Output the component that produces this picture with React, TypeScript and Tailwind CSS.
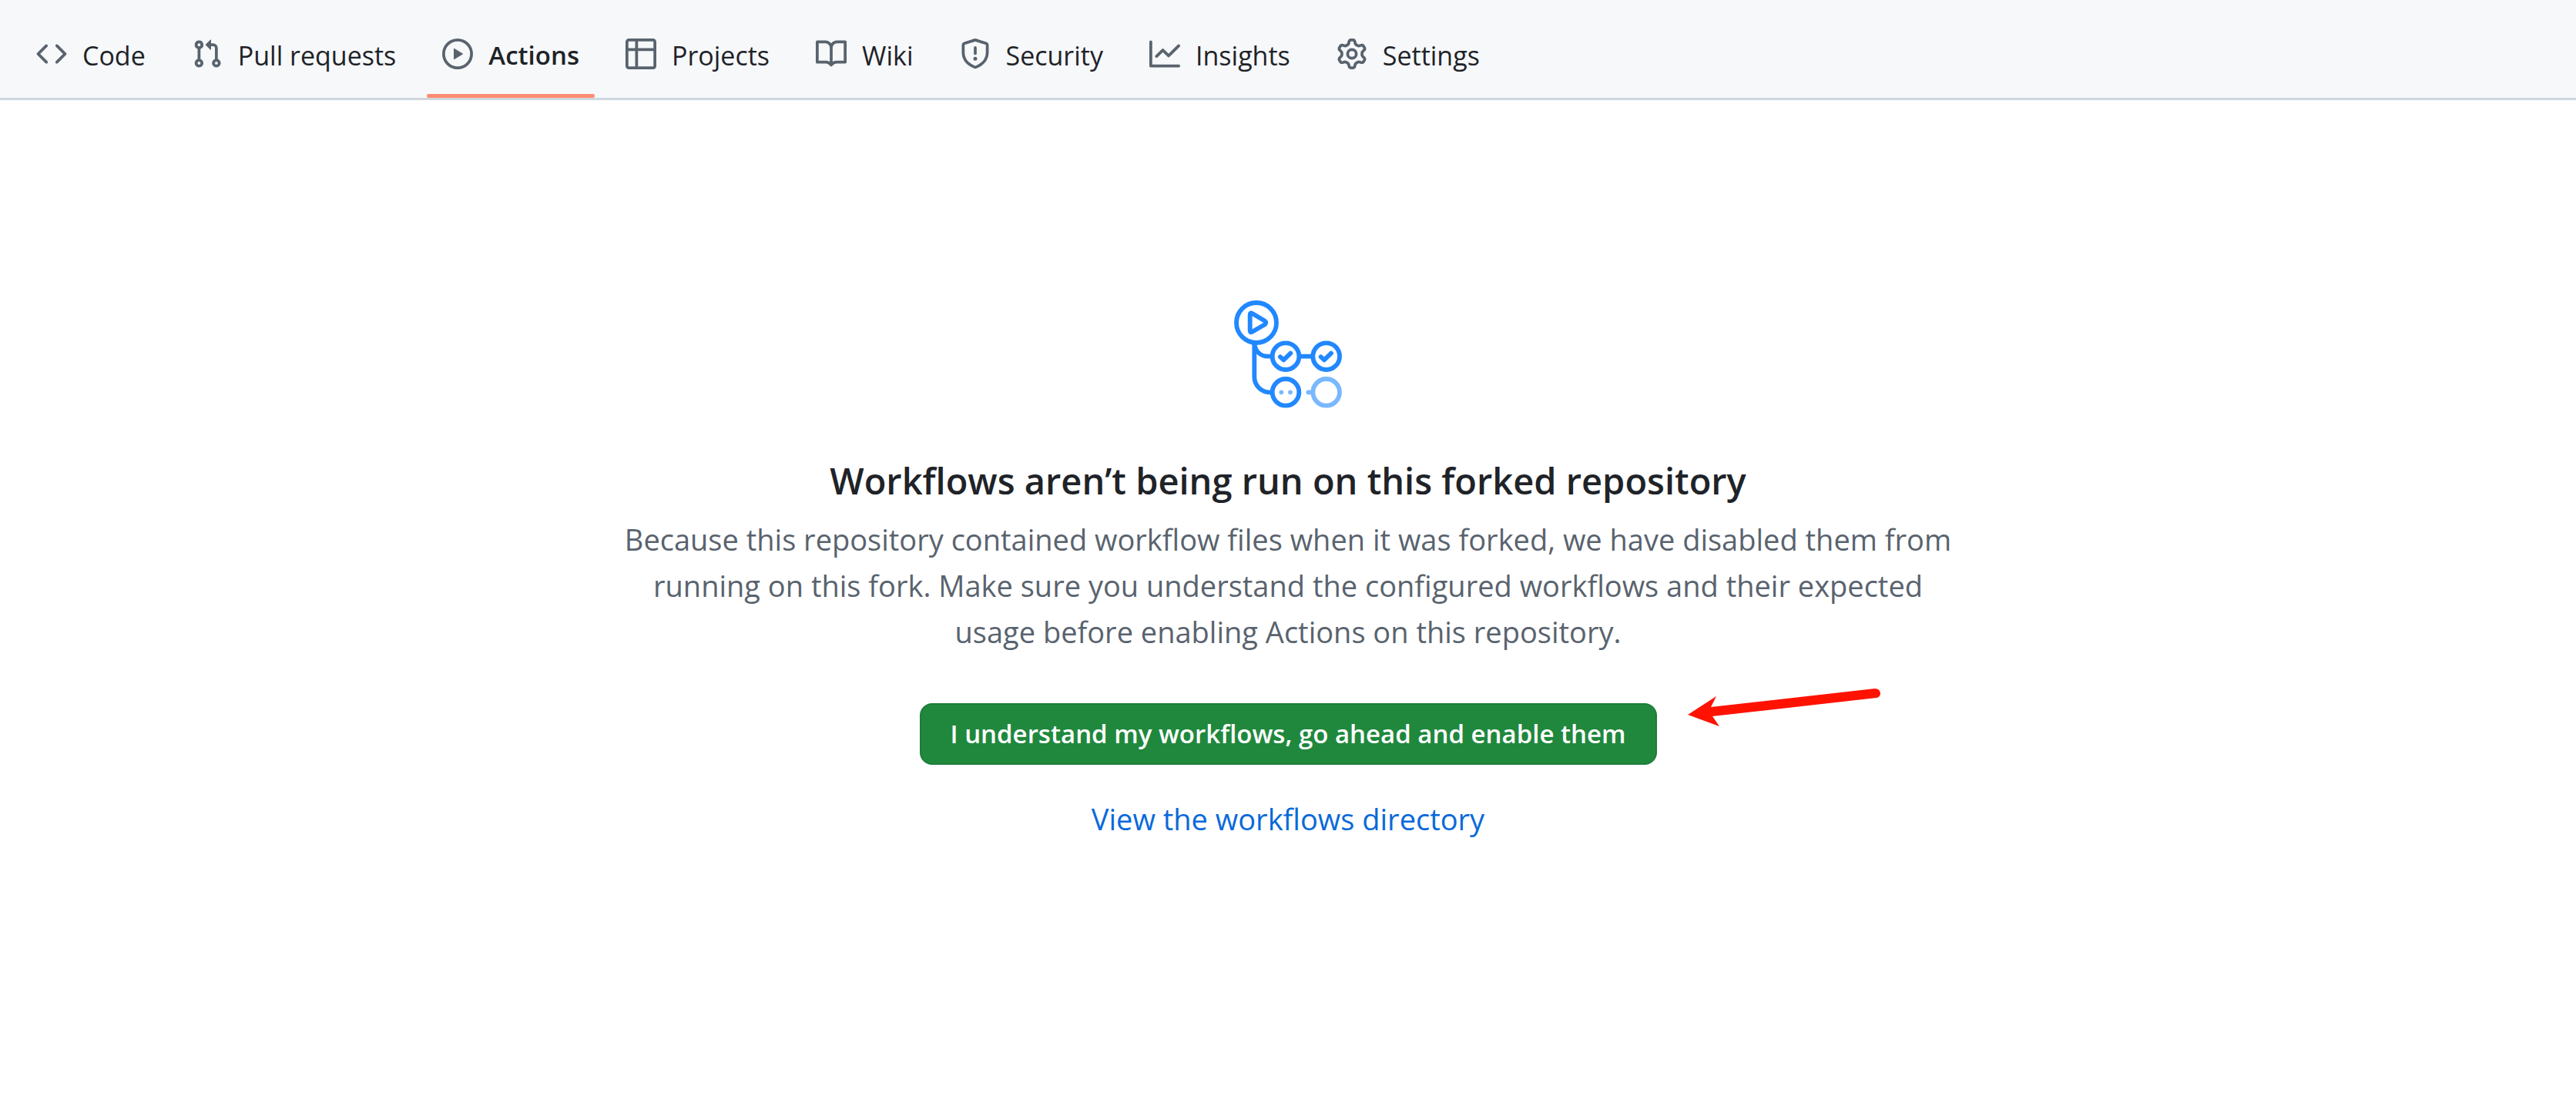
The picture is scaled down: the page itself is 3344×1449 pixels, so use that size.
type Tab = { label: string; path: string; active?: boolean };

const tabs: Tab[] = [
  {
    label: "Code",
    path: "m11.28 3.22 4.25 4.25a.75.75 0 0 1 0 1.06l-4.25 4.25a.749.749 0 0 1-1.275-.326.749.749 0 0 1 .215-.734L13.94 8l-3.72-3.72a.749.749 0 0 1 .326-1.275.749.749 0 0 1 .734.215Zm-6.56 0a.751.751 0 0 1 1.042.018.751.751 0 0 1 .018 1.042L2.06 8l3.72 3.72a.749.749 0 0 1-.326 1.275.749.749 0 0 1-.734-.215L.47 8.53a.75.75 0 0 1 0-1.06Z",
  },
  {
    label: "Pull requests",
    path: "M1.5 3.25a2.25 2.25 0 1 1 3 2.122v5.256a2.251 2.251 0 1 1-1.5 0V5.372A2.25 2.25 0 0 1 1.5 3.25Zm5.677-.177L9.573.677A.25.25 0 0 1 10 .854V2.5h1A2.5 2.5 0 0 1 13.5 5v5.628a2.251 2.251 0 1 1-1.5 0V5a1 1 0 0 0-1-1h-1v1.646a.25.25 0 0 1-.427.177L7.177 3.427a.25.25 0 0 1 0-.354ZM3.75 2.5a.75.75 0 1 0 0 1.5.75.75 0 0 0 0-1.5Zm0 9.5a.75.75 0 1 0 0 1.5.75.75 0 0 0 0-1.5Zm8.25.75a.75.75 0 1 0 1.5 0 .75.75 0 0 0-1.5 0Z",
  },
  {
    label: "Actions",
    active: true,
    path: "M8 0a8 8 0 1 1 0 16A8 8 0 0 1 8 0ZM1.5 8a6.5 6.5 0 1 0 13 0 6.5 6.5 0 0 0-13 0Zm4.879-2.773 4.264 2.559a.25.25 0 0 1 0 .428l-4.264 2.559A.25.25 0 0 1 6 10.559V5.442a.25.25 0 0 1 .379-.215Z",
  },
  {
    label: "Projects",
    path: "M0 1.75C0 .784.784 0 1.75 0h12.5C15.216 0 16 .784 16 1.75v12.5A1.75 1.75 0 0 1 14.25 16H1.75A1.75 1.75 0 0 1 0 14.25ZM6.5 6.5v8h7.75a.25.25 0 0 0 .25-.25V6.5Zm8-1.5V1.75a.25.25 0 0 0-.25-.25H6.5V5Zm-13 1.5v7.75c0 .138.112.25.25.25H5v-8ZM5 5V1.5H1.75a.25.25 0 0 0-.25.25V5Z",
  },
  {
    label: "Wiki",
    path: "M0 1.75A.75.75 0 0 1 .75 1h4.253c1.227 0 2.317.59 3 1.501A3.743 3.743 0 0 1 11.006 1h4.245a.75.75 0 0 1 .75.75v10.5a.75.75 0 0 1-.75.75h-4.507a2.25 2.25 0 0 0-1.591.659l-.622.621a.75.75 0 0 1-1.06 0l-.622-.621A2.25 2.25 0 0 0 5.258 13H.75a.75.75 0 0 1-.75-.75Zm7.251 10.324.004-5.073-.002-2.253A2.25 2.25 0 0 0 5.003 2.5H1.5v9h3.757a3.75 3.75 0 0 1 1.994.574ZM8.755 4.75l-.004 7.322a3.752 3.752 0 0 1 1.992-.572H14.5v-9h-3.495a2.25 2.25 0 0 0-2.25 2.25Z",
  },
  {
    label: "Security",
    path: "M7.467.133a1.748 1.748 0 0 1 1.066 0l5.25 1.68A1.75 1.75 0 0 1 15 3.48V7c0 1.566-.32 3.182-1.303 4.682-.983 1.498-2.585 2.813-5.032 3.855a1.697 1.697 0 0 1-1.33 0c-2.447-1.042-4.049-2.357-5.032-3.855C1.32 10.182 1 8.566 1 7V3.48a1.75 1.75 0 0 1 1.217-1.667Zm.61 1.429a.25.25 0 0 0-.153 0l-5.25 1.68a.25.25 0 0 0-.174.238V7c0 1.358.275 2.666 1.057 3.86.784 1.194 2.121 2.34 4.366 3.297a.196.196 0 0 0 .154 0c2.245-.956 3.582-2.104 4.366-3.298C13.225 9.666 13.5 8.36 13.5 7V3.48a.251.251 0 0 0-.174-.237l-5.25-1.68ZM8.75 4.75v3a.75.75 0 0 1-1.5 0v-3a.75.75 0 0 1 1.5 0ZM9 10.5a1 1 0 1 1-2 0 1 1 0 0 1 2 0Z",
  },
  {
    label: "Insights",
    path: "M1.5 1.75V13.5h13.75a.75.75 0 0 1 0 1.5H.75a.75.75 0 0 1-.75-.75V1.75a.75.75 0 0 1 1.5 0Zm14.28 2.53-5.25 5.25a.75.75 0 0 1-1.06 0L7 7.06 4.28 9.78a.751.751 0 0 1-1.042-.018.751.751 0 0 1-.018-1.042l3.25-3.25a.75.75 0 0 1 1.06 0L10 7.94l4.72-4.72a.751.751 0 0 1 1.042.018.751.751 0 0 1 .018 1.042Z",
  },
  {
    label: "Settings",
    path: "M8 0a8.2 8.2 0 0 1 .701.031C9.444.095 9.99.645 10.16 1.29l.288 1.107c.018.066.079.158.212.224.231.114.454.243.668.386.123.082.233.09.299.071l1.103-.303c.644-.176 1.392.021 1.82.63.27.385.506.792.704 1.218.315.675.111 1.422-.364 1.891l-.814.806c-.049.048-.098.147-.088.294.016.257.016.515 0 .772-.01.147.038.246.088.294l.814.806c.475.469.679 1.216.364 1.891a7.977 7.977 0 0 1-.704 1.217c-.428.61-1.176.807-1.82.63l-1.102-.302c-.067-.019-.177-.011-.3.071a5.909 5.909 0 0 1-.668.386c-.133.066-.194.158-.211.224l-.29 1.106c-.168.646-.715 1.196-1.458 1.26a8.006 8.006 0 0 1-1.402 0c-.743-.064-1.289-.614-1.458-1.26l-.289-1.106c-.018-.066-.079-.158-.212-.224a5.738 5.738 0 0 1-.668-.386c-.123-.082-.233-.09-.299-.071l-1.103.303c-.644.176-1.392-.021-1.82-.63a8.12 8.12 0 0 1-.704-1.218c-.315-.675-.111-1.422.363-1.891l.815-.806c.05-.048.098-.147.088-.294a6.214 6.214 0 0 1 0-.772c.01-.147-.038-.246-.088-.294l-.815-.806C.635 6.045.431 5.298.746 4.623a7.92 7.92 0 0 1 .704-1.217c.428-.61 1.176-.807 1.82-.63l1.102.302c.067.019.177.011.3-.071.214-.143.437-.272.668-.386.133-.066.194-.158.211-.224l.29-1.106C6.009.645 6.556.095 7.299.03 7.53.01 7.764 0 8 0Zm-.571 1.525c-.036.003-.108.036-.137.146l-.289 1.105c-.147.561-.549.967-.998 1.189-.173.086-.34.183-.5.29-.417.278-.97.423-1.529.27l-1.103-.303c-.109-.03-.175.016-.195.045-.22.312-.412.644-.573.99-.014.031-.021.11.059.19l.815.806c.411.406.562.957.53 1.456a4.709 4.709 0 0 0 0 .582c.032.499-.119 1.05-.53 1.456l-.815.806c-.081.08-.073.159-.059.19.162.346.353.677.573.989.02.03.085.076.195.046l1.102-.303c.56-.153 1.113-.008 1.53.27.161.107.328.204.501.29.447.222.85.629.997 1.189l.289 1.105c.029.109.101.143.137.146a6.6 6.6 0 0 0 1.142 0c.036-.003.108-.036.137-.146l.289-1.105c.147-.561.549-.967.998-1.189.173-.086.34-.183.5-.29.417-.278.97-.423 1.529-.27l1.103.303c.109.029.175-.016.195-.045.22-.313.411-.644.573-.99.014-.031.021-.11-.059-.19l-.815-.806c-.411-.406-.562-.957-.53-1.456a4.709 4.709 0 0 0 0-.582c-.032-.499.119-1.05.53-1.456l.815-.806c.081-.08.073-.159.059-.19a6.464 6.464 0 0 0-.573-.989c-.02-.03-.085-.076-.195-.046l-1.102.303c-.56.153-1.113.008-1.53-.27a4.44 4.44 0 0 0-.501-.29c-.447-.222-.85-.629-.997-1.189l-.289-1.105c-.029-.11-.101-.143-.137-.146a6.6 6.6 0 0 0-1.142 0ZM11 8a3 3 0 1 1-6 0 3 3 0 0 1 6 0ZM9.5 8a1.5 1.5 0 1 0-3.001.001A1.5 1.5 0 0 0 9.5 8Z",
  },
];

function RepoTab({ label, path, active }: Tab) {
  return (
    <li className="flex flex-col">
      <a
        href="#"
        aria-current={active ? "page" : undefined}
        className="flex items-start gap-5 px-5 pt-[50px] pb-7 text-[#1f2328]"
      >
        <svg viewBox="0 0 16 16" className="size-10 shrink-0 fill-[#59636e]" aria-hidden="true">
          <path d={path} />
        </svg>
        <span
          className={
            active
              ? "text-[33px] leading-[44px] font-semibold whitespace-nowrap"
              : "text-[34px] leading-[44px] whitespace-nowrap"
          }
        >
          {label}
        </span>
      </a>
      <span className={active ? "h-[5px] rounded-full bg-[#fd8c73]" : "h-[5px]"} />
    </li>
  );
}

function WorkflowGraphic() {
  return (
    <svg viewBox="69 60 420 420" className="size-[140px]" fill="none" strokeLinecap="round" strokeLinejoin="round" aria-hidden="true">
      <g stroke="#2188ff" strokeWidth="17.5">
        <circle cx="156" cy="147" r="78" />
        <path d="M131 116Q131 106 140 111L189 140Q197 147 189 154L140 182Q131 187 131 177Z" />
        <path strokeLinecap="butt" d="M148 226V358A60 60 0 0 0 208 418H218" />
        <path strokeLinecap="butt" d="M148 226C150 258 172 278 200 278H218" />
        <path strokeLinecap="butt" d="M322 278H376" />
        <circle cx="270" cy="278" r="52" />
        <circle cx="428" cy="278" r="52" />
        <circle cx="270" cy="418" r="52" />
        <path d="M249 280L262 292L289 266M407 280L420 292L447 266" />
      </g>
      <g stroke="#79b8ff" strokeWidth="17.5">
        <circle cx="428" cy="418" r="52" />
        <path d="M358 418H374" />
        <path d="M253 418H253.1M288 418H288.1" />
      </g>
    </svg>
  );
}

function PointerArrow() {
  return (
    <svg
      viewBox="0 0 250 50"
      className="pointer-events-none absolute -top-5 left-full ml-10 h-[50px] w-[250px]"
      aria-hidden="true"
    >
      <path
        fill="#ff1200"
        d="M0 35L37 11L30 25L243 1Q249 1 250 7Q250 12 245 13L32 37L41 50Z"
      />
    </svg>
  );
}

export default function App() {
  return (
    <div className="min-h-screen bg-white font-['Open_Sans',sans-serif] text-[#1f2328]">
      <nav aria-label="Repository" className="border-b-3 border-[#d0d7de] bg-[#f6f8fa]">
        <ul className="flex gap-5 px-[27px]">
          {tabs.map((tab) => (
            <RepoTab key={tab.label} {...tab} />
          ))}
        </ul>
      </nav>
      <main className="flex flex-col items-center px-10 pt-[260px] pb-20 text-center">
        <WorkflowGraphic />
        <h1 className="mt-16 text-[47px] leading-[60px] font-semibold">
          Workflows aren’t being run on this forked repository
        </h1>
        <p className="mt-4 max-w-[1740px] text-[38px] leading-[60px] text-[#59636e]">
          Because this repository contained workflow files when it was forked, we have disabled them from running on
          this fork. Make sure you understand the configured workflows and their expected usage before enabling Actions
          on this repository.
        </p>
        <div className="relative mt-[63px]">
          <button
            type="button"
            className="block rounded-2xl border-2 border-[#1f7c3a] bg-[#1f883d] px-[38px] py-4 text-[33px] leading-[44px] font-semibold text-white"
          >
            I understand my workflows, go ahead and enable them
          </button>
          <PointerArrow />
        </div>
        <a href="#" className="mt-10 text-[38px] leading-[60px] text-[#0969da]">
          View the workflows directory
        </a>
      </main>
    </div>
  );
}
